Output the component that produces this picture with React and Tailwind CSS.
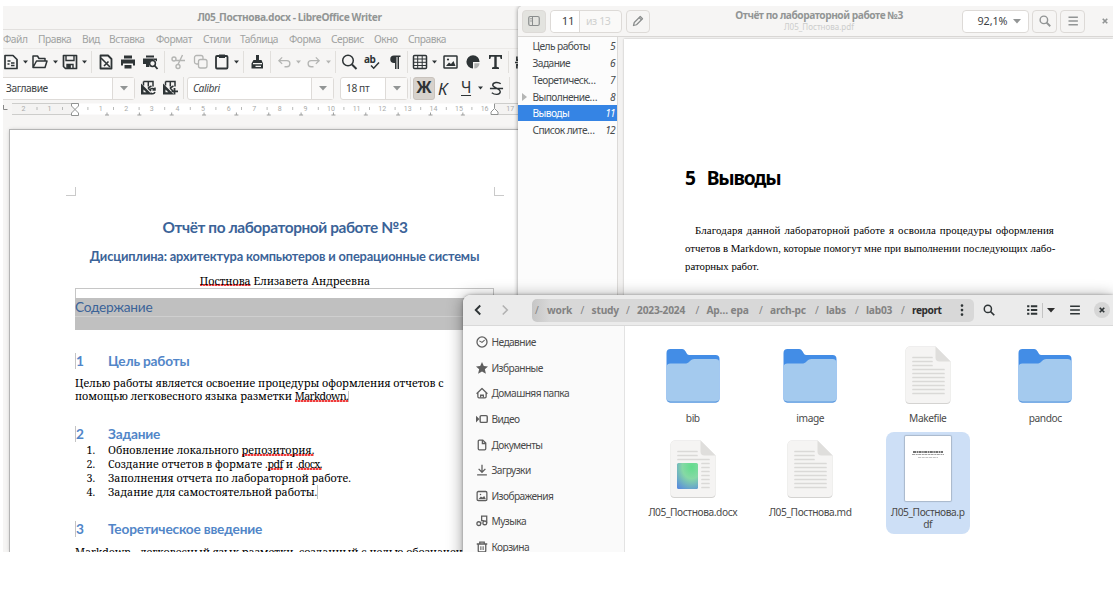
import React from 'react';

function Glyph({ children, size = 'w-[16px] h-[16px] -ml-[0.5px]', className = 'text-[#2e3436]' }) {
  return (
    <svg viewBox="0 0 16 16" className={`shrink-0 overflow-visible ${size} ${className}`} fill="none" stroke="currentColor" strokeWidth="1.7">
      {children}
    </svg>
  );
}

function Arrow({ className = 'text-[#2e3436]' }) {
  return (
    <svg viewBox="0 0 7 4" className={`w-[7px] h-[4px] shrink-0 ${className}`} fill="currentColor">
      <path d="M1 .5h5L3.500 3.500z" />
    </svg>
  );
}

const Sep = () => <div className="h-[22px] w-px bg-[#e1dfdc]" />;
const GREY = 'text-[#b4b5b3]';

const toolbar = [
  ['w-[19px]', <Glyph><path d="M2 1.500h8l4 4v9H2z" strokeLinejoin="round" /><path d="M4.500 7h3M4.500 10h2M8 9h3.500M8 11.500h3.500" strokeWidth="1.300" /></Glyph>],
  ['w-[10px]', <Arrow />],
  ['w-[20px]', <Glyph><path d="M1 13.500V2h4.500l1.500 2.500h6V7M1 13.500L4.500 7H15l-2 6.500z" strokeLinejoin="round" strokeWidth="1.500" /></Glyph>],
  ['w-[10px]', <Arrow />],
  ['w-[19px]', <Glyph><path d="M1.500 1.500h13v13h-11l-2-2z" strokeLinejoin="round" /><path d="M4 1.500v5h8v-5M5 14.500v-4h6v4" strokeWidth="1.400" /><path d="M6 11h2v3H6z" fill="currentColor" /></Glyph>],
  ['w-[10px]', <Arrow />],
  ['w-[7px]', <Sep />],
  ['w-[22px]', <Glyph><path d="M2.500 1.500h7.500l3.500 3.500v9.500h-11z" strokeLinejoin="round" strokeWidth="1.800" /><path d="M3 4l9 9M10.500 7.500L6 12" strokeWidth="1.600" /></Glyph>],
  ['w-[22px]', <Glyph><path d="M4 1.500h8v3H4zM1 5.500h14v6h-2v-2H3v2H1zM4.500 11h7v3.500h-7z" fill="currentColor" stroke="none" /></Glyph>],
  ['w-[22px]', <Glyph><path d="M4 1.500h8v2H4zM1 4.500h14v3a4.500 4.500 0 0 0-8 3.500l.5 2H4v-3H1z" fill="currentColor" stroke="none" /><circle cx="10.500" cy="9.500" r="2.900" strokeWidth="1.500" /><path d="M12.500 11.500L15.500 15" strokeWidth="1.900" /></Glyph>],
  ['w-[6px]', <Sep />],
  ['w-[23px]', <Glyph className={GREY}><circle cx="4" cy="5" r="2" strokeWidth="1.400" /><circle cx="8" cy="12.500" r="2" strokeWidth="1.400" /><path d="M6 6.500h9M8 10.500L12.500 1" strokeWidth="1.400" /></Glyph>],
  ['w-[21px]', <Glyph className={GREY}><rect x="1.500" y="1.500" width="8.500" height="8.500" rx="2" strokeWidth="1.300" /><rect x="5.500" y="5.500" width="8.500" height="8.500" rx="2" fill="#f6f5f4" strokeWidth="1.300" /></Glyph>],
  ['w-[19px]', <Glyph><rect x="2" y="2" width="11.500" height="12.500" rx="1" strokeWidth="1.800" /><path d="M5 .5h6v3.500H5z" fill="currentColor" stroke="none" /></Glyph>],
  ['w-[10px]', <Arrow />],
  ['w-[6px]', <Sep />],
  ['w-[21px]', <Glyph><path d="M7 1h3v5h2.500l1.500 3.500v5H2.500v-5L4.500 6H7z" fill="currentColor" stroke="none" /><path d="M4 9.700h9M6.500 12.300h5.500" stroke="#f6f5f4" strokeWidth="1.200" /></Glyph>],
  ['w-[7px]', <Sep />],
  ['w-[18px]', <Glyph className={GREY} size="w-[15px] h-[15px]"><path d="M5.500 2.500L2 6l3.500 3.500M2 6h8.500a3.200 3.200 0 0 1 0 6.500H8" strokeWidth="1.400" /></Glyph>],
  ['w-[11px]', <Arrow className={GREY} />],
  ['w-[19px]', <Glyph className={GREY} size="w-[15px] h-[15px]"><path d="M10.500 2.500L14 6l-3.500 3.500M14 6H5.500a3.200 3.200 0 0 0 0 6.500H8" strokeWidth="1.400" /></Glyph>],
  ['w-[10px]', <Arrow className={GREY} />],
  ['w-[6px]', <Sep />],
  ['w-[23px]', <Glyph><circle cx="7" cy="6.500" r="5.300" strokeWidth="1.500" /><path d="M11 10.500l4.500 4.500" strokeWidth="1.900" /></Glyph>],
  ['w-[24px]', <div className="relative h-[16px] w-[15px] text-[10px] leading-[10px] font-bold tracking-[-0.4px] text-[#2e3436]">ab<div className="absolute top-0 left-0"><Glyph><path d="M7 11.500l2.700 2.700L15 8.500" strokeWidth="1.500" /></Glyph></div></div>],
  ['w-[19px]', <Glyph><path d="M6 1.500h6.500v1.500H11v12H9.500V3H8.500v12H7V9H6a3.700 3.700 0 0 1 0-7.500z" fill="currentColor" stroke="none" /></Glyph>],
  ['w-[5px]', <Sep />],
  ['w-[19px]', <Glyph><rect x="1.500" y="1.500" width="13" height="13" rx="1" strokeWidth="1.500" /><path d="M1.500 5h13M1.500 8.300h13M1.500 11.500h13M5.700 1.500v13M10.200 1.500v13" strokeWidth="1" /></Glyph>],
  ['w-[12px]', <Arrow />],
  ['w-[22px]', <Glyph><rect x="1" y="2" width="13" height="12" rx=".6" strokeWidth="1.500" /><path d="M3 12l3-3.500 2 1.500 2.500-3 2 5z" fill="currentColor" stroke="none" /><circle cx="5" cy="5.500" r="1.100" fill="currentColor" stroke="none" /></Glyph>],
  ['w-[23px]', <Glyph><path d="M8 1.200a6.600 6.600 0 1 0 0 13.200V8h6.600A6.600 6.600 0 0 0 8 1.200z" fill="currentColor" stroke="none" /><path d="M9.300 9.300h5.200a5.200 5.200 0 0 1-5.200 5.200z" fill="#b0b2b1" stroke="none" /></Glyph>],
  ['w-[20px]', <Glyph><path d="M1 1h13v4h-1.300L12 2.800H8.700v10l2.300.7V15H4v-1.500l2.300-.7v-10H3L2.300 5H1z" fill="currentColor" stroke="none" /></Glyph>],
  ['w-[7px]', <Sep />],
  ['w-[16px]', <Glyph size="w-[15px] h-[15px]"><path d="M2 1.500v4h12v-4M2 14.500v-4h12v4M0 8h3M5 8h3" /></Glyph>],
];

const menu = [
  ['Файл', 'w-[35px]'], ['Правка', 'w-[44px]'], ['Вид', 'w-[27px]'], ['Вставка', 'w-[47px]'],
  ['Формат', 'w-[47px]'], ['Стили', 'w-[37px]'], ['Таблица', 'w-[49px]'], ['Форма', 'w-[42px]'],
  ['Сервис', 'w-[43px]'], ['Окно', 'w-[34px]'], ['Справка', 'w-[40px]'],
];

function StyleIcon({ plus }) {
  return (
    <Glyph>
      <path d="M3.500 1.500h9.500v5M3.500 1.500v4M8.300 1.500v5" strokeWidth="1.500" />
      <path d="M1 3.500L12 14.500H1z" fill="currentColor" stroke="none" />
      <path d="M3.500 9.500v2.800h2.800z" fill="#f6f5f4" stroke="none" />
      <path d="M8 8l3 3M8 8l3.500-2" strokeWidth="1.500" />
      {plus ? <path d="M12.500 8v6.500M9.500 11.300h6.500" strokeWidth="1.800" /> : <path d="M10 10a2.600 2.600 0 0 1 4.500-.5M15 12a2.600 2.600 0 0 1-4.500.8M15 7.500v2.500h-2.500" strokeWidth="1.500" />}
    </Glyph>
  );
}

function Combo({ width, text, italic = '' }) {
  return (
    <div className={`flex h-[23px] shrink-0 rounded-[3px] border border-[#dedbd8] bg-white ${width}`}>
      <div className={`flex flex-1 items-center pl-[5px] ${italic}`}>{text}</div>
      <div className="flex w-[22px] items-center justify-center border-l border-[#dedbd8] bg-[#faf9f8]">
        <svg viewBox="0 0 8 5" className="h-[5px] w-[8px]" fill="#929595"><path d="M0 0h8L4 4.600z" /></svg>
      </div>
    </div>
  );
}

function Ruler() {
  const nums = Array.from({ length: 17 }, (_, i) => i + 1);
  const tabs = Array.from({ length: 12 }, (_, i) => i);
  return (
    <svg viewBox="0 0 515 29" className="h-[29px] w-[515px] shrink-0">
      <rect x="9" y="2.500" width="500" height="11" fill="#fff" />
      <rect x="9" y="2.500" width="63" height="11" fill="#f4f3f2" />
      <rect x="491" y="2.500" width="24" height="11" fill="#f4f3f2" />
      <path d="M9 2.500h63M9 13.500h63M491 2.500h24M491 13.500h24" stroke="#cdcdcb" />
      <path d="M0.500 4v4.500H4.500" stroke="#888" fill="none" />
      <g fontFamily="Roboto, sans-serif" fontSize="7" fill="#a8aaa9" textAnchor="middle">
        <text x="20.500" y="10">2</text>
        <text x="46.500" y="10">1</text>
        {nums.map((n) => <text key={n} x={72 + n * 25.6} y="10">{n}</text>)}
      </g>
      <g stroke="#b9bab9">
        <path d="M34 6v3M59.500 6v3" />
        {nums.slice(0, 16).map((n) => <path key={n} d={`M${59.3 + n * 25.6} 6v3`} />)}
      </g>
      {tabs.map((n) => <path key={n} d={`M${102 + n * 32.35} 14h4M${104 + n * 32.35} 11.500v2.500`} stroke="#9d9f9e" />)}
      <path d="M68.500 2.500h7v2.500l-3.500 3.500 3.500 3.500v2.500h-7V12l3.500-3.500L68.500 5z" fill="#fff" stroke="#858786" strokeWidth=".9" />
      <path d="M488 13.500v-2.500l3.500-3.500 3.500 3.500v2.500zM491.500 7V3" fill="#fff" stroke="#858786" strokeWidth=".9" />
    </svg>
  );
}

const Bad = ({ children, className = '' }) => (
  <span className={`bg-[linear-gradient(90deg,#ef3b3b_60%,#f7a3a3_60%)] bg-[length:3px_1.5px] bg-[position:0_88%] bg-repeat-x ${className}`}>{children}</span>
);

function Heading({ n, children }) {
  return (
    <div className="flex h-[20px] items-center font-['Lato'] text-[13.7px] leading-none font-bold tracking-[-0.2px] text-[#5286c8]">
      <div className="flex h-[16px] w-[33px] items-center border-l border-[#c4c4c4]">{n}</div>
      {children}
    </div>
  );
}

function Writer() {
  return (
    <div className="absolute top-0 left-0 flex h-[546px] w-[573px] flex-col overflow-hidden bg-[#f6f5f4] font-['Noto_Sans'] text-[10.2px] leading-none whitespace-nowrap">
      <div className="flex h-[24px] shrink-0 items-center justify-center border-b border-[#e2e0de] pb-px text-[10.2px] font-bold tracking-[-0.4px] text-[#929595]">
        Л05_Постнова.docx - LibreOffice Writer
      </div>
      <div className="flex h-[19px] shrink-0 items-center border-b border-[#ebe9e7] pt-px tracking-[-0.45px] text-[#a0a2a1]">
        {menu.map(([t, w]) => <span key={t} className={`shrink-0 ${w}`}>{t}</span>)}
      </div>
      <div className="flex h-[26px] shrink-0 items-center">
        {toolbar.map(([w, el], i) => <div key={i} className={`flex shrink-0 items-center ${w}`}>{el}</div>)}
      </div>
      <div className="flex h-[26px] shrink-0 items-center tracking-[-0.4px] text-[#3d4244]">
        <Combo width="w-[135px] -ml-[3px] mr-[5px]" text="Заглавие" />
        <div className="w-[22px]"><StyleIcon /></div>
        <div className="w-[21px]"><StyleIcon plus /></div>
        <Sep />
        <Combo width="w-[147px] ml-[3px]" text="Calibri" italic="italic" />
        <Combo width="w-[68px] ml-[6px] mr-[2px]" text="18 пт" />
        <Sep />
        <div className="ml-[2px] flex h-[23px] w-[22px] shrink-0 items-center justify-center rounded-[3px] border border-[#c9c3bd] bg-[#d7d2cc] text-[15.5px] font-bold tracking-normal text-[#2e3436]">Ж</div>
        <div className="ml-[3px] w-[23px] text-[17px] text-[#2e3436] italic">К</div>
        <div className="w-[16px] text-[15.5px] text-[#2e3436] underline decoration-1 underline-offset-2">Ч</div>
        <div className="w-[12px]"><Arrow /></div>
        <div className="flex w-[20px]">
          <Glyph size="w-[15px] h-[15px]"><path d="M12.500 3C10 .8 4 1 4 4.500 4 7 12 8 12 11.500c0 3.500-6 3.500-9 1M1 8h14" strokeWidth="1.500" /></Glyph>
        </div>
        <Sep />
      </div>
      <Ruler />
      <div className="relative ml-[7px] flex h-[422px] w-[566px] shrink-0 flex-col bg-white pt-[85px] pl-[65px] text-black shadow-[0_0_0_1px_#b4b4b4,0_0_4px_rgba(0,0,0,0.25)]">
        <div className="absolute top-[57px] left-[56px] h-[9px] w-[10px] border-r border-b border-[#cacaca]" />
        <div className="absolute top-[57px] left-[484px] h-[9px] w-[10px] border-b border-l border-[#cacaca]" />
        <div className="flex w-[419px] flex-col font-['Noto_Serif'] text-[10.71px]">
          <div className="flex h-[25px] items-center justify-center pl-px font-['Lato'] text-[15.4px] font-bold tracking-[-0.4px] text-[#3b6398]">Отчёт по лабораторной работе №3</div>
          <div className="flex h-[33px] items-center justify-center font-['Lato'] text-[12.8px] font-bold tracking-[-0.15px] text-[#3b6398]">Дисциплина: архитектура компьютеров и операционные системы</div>
          <div className="flex h-[15px] items-center justify-center pt-px pl-px whitespace-pre"><Bad>Постнова</Bad> Елизавета Андреевна</div>
          <div className="h-[10px] border border-b-0 border-[#c6c6c6]" />
          <div className="flex h-[32px] flex-col bg-[#c0c0c0]">
            <div className="flex h-[19px] items-center border-b border-[#cfcfcf] font-['Lato'] text-[13.7px] tracking-[-0.25px] text-[#3b6398]">Содержание</div>
          </div>
          <div className="h-[21px]" />
          <Heading n="1">Цель работы</Heading>
          <div className="mt-[6px] flex h-[13px] items-center">Целью работы является освоение процедуры оформления отчетов с</div>
          <div className="flex h-[13px] items-center whitespace-pre">помощью легковесного языка разметки <span className="border-r border-[#c4c4c4]"><Bad className="tracking-[-0.58px]">Markdown.</Bad></span></div>
          <div className="h-[21px]" />
          <Heading n="2">Задание</Heading>
          <div className="-mt-px grid auto-rows-[14.2px] grid-cols-[21px_1fr] items-center">
            <span className="pl-[11.5px]">1.</span><span className="pl-[12px]">Обновление локального <Bad>репозитория.</Bad></span>
            <span className="pl-[11.5px]">2.</span><span className="pl-[12px]">Создание отчетов в формате .<Bad className="tracking-[-0.6px]">pdf</Bad> и .<Bad className="tracking-[-0.7px]">docx.</Bad></span>
            <span className="pl-[11.5px]">3.</span><span className="pl-[12px]">Заполнения отчета по лабораторной работе.</span>
            <span className="pl-[11.5px]">4.</span><span className="pl-[12px]"><span className="border-r border-[#c4c4c4]">Задание для самостоятельной работы.</span></span>
          </div>
          <div className="h-[19px]" />
          <Heading n="3">Теоретическое введение</Heading>
          <div className="mt-[7px] flex h-[13px] items-center">Markdown - легковесный язык разметки, созданный с целью обозначения</div>
        </div>
      </div>
    </div>
  );
}

const outline = [['Цель работы', 5], ['Задание', 6], ['Теоретическ…', 7], ['Выполнение…', 8], ['Выводы', 11], ['Список лите…', 12]];
const headBtn = 'flex h-[23px] items-center justify-center rounded-[4px] border border-[#dddad7] shrink-0';

function Viewer() {
  return (
    <div className="absolute top-0 left-[515px] flex h-[546px] w-[595px] flex-col overflow-hidden rounded-tl-[5px] bg-white font-['Noto_Sans'] text-[10.2px] leading-none whitespace-nowrap shadow-[0_0_4px_rgba(0,0,0,0.45)]">
      <div className="flex h-[31px] shrink-0 items-center border-b border-[#d9d7d5] bg-[#f6f5f4] pl-[4px]">
        <div className={`${headBtn} w-[24px] bg-[#e3e3df]`}>
          <Glyph size="w-[12px] h-[12px]" className="text-[#8a8d8d]"><rect x="1" y="2" width="14" height="12" rx="2" strokeWidth="1.600" /><path d="M6 2v12M3 5h2M3 8h2" strokeWidth="1.400" /></Glyph>
        </div>
        <div className={`${headBtn} ml-[4px] w-[72px] bg-[#faf9f8]`}>
          <div className="flex h-full w-[29px] items-center justify-end rounded-l-[4px] border-r border-[#dddad7] bg-white pr-[5px] text-[11.500px] tracking-[-0.5px] text-[#3d4244]">11</div>
          <div className="flex-1 pl-[6px] text-[10.500px] tracking-[-0.4px] text-[#cfd0cf]">из 13</div>
        </div>
        <div className={`${headBtn} ml-[4px] w-[24px]`}>
          <Glyph size="w-[12px] h-[12px]" className="text-[#8a8d8d]"><path d="M2 14l1-4L11 2l3 3-8 8zM9.500 3.500l3 3" strokeWidth="1.700" strokeLinejoin="round" /></Glyph>
        </div>
        <div className="flex flex-1 flex-col items-center gap-[3px] pb-px pl-[26px]">
          <div className="font-bold tracking-[-0.46px] text-[#929595]">Отчёт по лабораторной работе №3</div>
          <div className="text-[8px] text-[#cccdcc]">Л05_Постнова.pdf</div>
        </div>
        <div className={`${headBtn} w-[67px] gap-[6px] bg-white pl-[8px] text-[10.800px] tracking-[-0.1px] text-[#3d4244]`}>
          92,1%
          <svg viewBox="0 0 8 5" className="h-[5px] w-[8px]" fill="#929595"><path d="M0 0h8L4 4.600z" /></svg>
        </div>
        <div className={`${headBtn} ml-[3px] w-[25px]`}>
          <Glyph size="w-[12px] h-[12px]" className="text-[#929595]"><circle cx="6.500" cy="6.500" r="5" strokeWidth="1.900" /><path d="M10 10l5 5" strokeWidth="2.400" /></Glyph>
        </div>
        <div className={`${headBtn} mr-[17px] ml-[3px] w-[25px]`}>
          <Glyph size="w-[12px] h-[12px]" className="text-[#929595]"><path d="M2 3h12.500M2 8h12.500M2 13h12.500" strokeWidth="1.900" /></Glyph>
        </div>
        <Glyph size="w-[6px] h-[6px] mr-[5px]" className="text-[#929595]"><path d="M2 2l12 12M14 2L2 14" strokeWidth="4.500" /></Glyph>
      </div>
      <div className="flex min-h-0 flex-1">
        <div className="flex w-[100px] shrink-0 flex-col border-r border-[#dcdad8] bg-[#fcfcfc] text-[#474b4d]">
          {outline.map(([t, n]) => (
            <div key={t} className={`flex h-[16.9px] shrink-0 items-center justify-between pt-px pr-[2px] ${n === 11 ? 'bg-[#3584e4] text-white' : ''}`}>
              <div className="flex items-center tracking-[-0.56px]">
                <div className="w-[14.5px] pl-[4px]">{n === 8 && <svg viewBox="0 0 5 8" className="h-[8px] w-[5px]" fill="#b5b6b5"><path d="M0 0l5 4-5 4z" /></svg>}</div>
                {t}
              </div>
              <span className="tracking-[-0.7px] italic">{n}</span>
            </div>
          ))}
        </div>
        <div className="flex flex-1 flex-col bg-[#f3f2f1] pt-[2px] pl-[6px]">
          <div className="flex flex-1 flex-col bg-white pt-[124px] pl-[61px] font-['Liberation_Serif'] text-[10.8px] text-black shadow-[0_0_2px_rgba(0,0,0,0.25)]">
            <div className="flex h-[30px] items-center gap-[12px] font-['Noto_Sans'] text-[19.2px] font-bold tracking-[-1.2px]"><span>5</span><span>Выводы</span></div>
            <div className="mt-[28px] w-[370px] leading-[18px]">
              <div className="-mr-px ml-[10px] w-[359px] text-[10.900px] tracking-[0.12px] [text-align-last:justify]">Благодаря данной лабораторной работе я освоила процедуры оформления</div>
              <div className="[text-align-last:justify]">отчетов в Markdown, которые помогут мне при выполнении последующих лабо-</div>
              <div>раторных работ.</div>
            </div>
          </div>
        </div>
      </div>
    </div>
  );
}

const places = [
  ['Недавние', <><circle cx="8" cy="8" r="6.700" /><path d="M4.500 6.500L8 8.500l3.500-3" strokeWidth="1.500" /></>],
  ['Избранные', <path d="M8 0l2.400 5.300 5.600.6-4.200 3.700 1.400 5.900L8 12.500l-5.200 3 1.400-5.900L0 5.900l5.600-.6z" fill="currentColor" stroke="none" />],
  ['Домашняя папка', <><path d="M.8 9L8 2l7.200 7M2.500 7.500v5.500A1.500 1.500 0 0 0 4 14.500h8a1.500 1.500 0 0 0 1.500-1.500V7.500" strokeLinejoin="round" strokeWidth="1.700" /><path d="M6.200 14v-3h3.600v3" strokeWidth="1.700" /></>],
  ['Видео', <><rect x="5.500" y="3.500" width="9.500" height="9" rx="1.500" strokeWidth="1.900" /><path d="M0 3.500L4.500 8 0 12.500z" fill="currentColor" stroke="none" /></>],
  ['Документы', <path d="M3 3a1.500 1.500 0 0 1 1.500-1.500H9L13 5.500v7.500a1.500 1.500 0 0 1-1.500 1.500h-7A1.500 1.500 0 0 1 3 13zM8.500 1.500V6H13" />],
  ['Загрузки', <path d="M8 1v9.500M3.500 6.500L8 11l4.500-4.500M1.500 14.500h13" />],
  ['Изображения', <><rect x="1.500" y="2" width="13" height="12" rx="1.500" /><path d="M3.500 12l3-3.500 2 1.500 2.500-2 2 4z" fill="currentColor" stroke="none" /><circle cx="6" cy="6" r="1" fill="currentColor" stroke="none" /></>],
  ['Музыка', <><circle cx="3.700" cy="11.500" r="2.500" /><circle cx="11.700" cy="10.500" r="2.500" /><path d="M6.300 12V9M14.300 11V1.500H7.500V7.500h3" /></>],
  ['Корзина', <><path d="M3 4.500v8.500a1.500 1.500 0 0 0 1.500 1.500h7A1.500 1.500 0 0 0 13 13V4.500M1 4h14M5 3.500V1.500h6v2" /><path d="M6.500 7v5M9.500 7v5" strokeWidth="1.400" /></>],
];

const crumbs = [['work', 'w-[33.5px]'], ['study', 'w-[34.5px]'], ['2023-2024', 'w-[58.5px]'], ['Ap… epa', 'w-[52.5px]'], ['arch-pc', 'w-[45px]'], ['labs', 'w-[29px]'], ['lab03', 'w-[35px]']];

const Folder = () => (
  <svg viewBox="0 0 54 56" className="h-[56px] w-[54px]">
    <path d="M.5 5A4 4 0 0 1 4.500 1H15c3.500 0 4 1.500 5.500 4 1 2 2 2 4 2H49.500a4 4 0 0 1 4 4v39.500a4 4 0 0 1-4 4h-45a4 4 0 0 1-4-4z" fill="#438de6" />
    <path d="M.5 19.500a4 4 0 0 1 4-4H19c2 0 3-.5 4.500-2s2.500-2.500 5-2.500h21a4 4 0 0 1 4 4v35a4 4 0 0 1-4 4h-45a4 4 0 0 1-4-4z" fill="#a4caee" />
    <path d="M1 51.500a4 4 0 0 0 3.500 3h45a4 4 0 0 0 3.500-3 4 4 0 0 1-3.500 2h-45a4 4 0 0 1-3.500-2z" fill="#5b97dc" />
  </svg>
);

function Doc({ id, picture }) {
  const rows = [12, 16, 20, 24, 28, 32, 36, 40, 44, 48];
  return (
    <svg viewBox="0 0 46 58" className="h-[58px] w-[46px]">
      <defs>
        <radialGradient id={id} cx=".7" cy=".15" r="1"><stop offset="0" stopColor="#62dc8c" /><stop offset=".45" stopColor="#86d9a5" /><stop offset="1" stopColor="#5b8fdb" /></radialGradient>
      </defs>
      <path d="M.5 5a4.500 4.500 0 0 1 4.500-4.500h25.500L45.500 15.500V54a4 4 0 0 1-4 4H4.500a4 4 0 0 1-4-4z" fill="#d4d3d1" />
      <path d="M.5 5A4.500 4.500 0 0 1 5 .5h25.500L45.500 15.500V52.500a4 4 0 0 1-4 4.500H4.500a4 4 0 0 1-4-4.500z" fill="#f5f4f3" />
      <path d="M30.500 .5V11.500a4 4 0 0 0 4 4H45.500z" fill="#dfdedc" />
      <g stroke="#dad9d7" strokeWidth="1.700" strokeLinecap="round">
        {rows.map((y, i) => {
          const narrow = picture ? i > 2 : false;
          const end = picture ? (i < 2 ? 27 : 39) : i < 3 ? 27 : 39;
          return <path key={y} d={`M${narrow ? 32 : 8} ${y - 0.5}H${end}`} />;
        })}
      </g>
      {picture && <rect x="7" y="23" width="21" height="26" rx="1.500" fill={`url(#${id})`} />}
    </svg>
  );
}

const PdfPage = () => (
  <div className="flex h-[65px] w-[46px] flex-col items-center rounded-[1px] bg-white pt-[14px] shadow-[0_0_1px_1px_rgba(0,0,0,0.18)]">
    <svg viewBox="0 0 34 10" className="h-[10px] w-[34px]">
      <path d="M2 2h30" stroke="#444" strokeWidth="1.300" strokeDasharray="3 .6 1.500 .5" />
      <path d="M1 4.500h32" stroke="#888" strokeWidth=".8" strokeDasharray="3 .7 2 .5" />
      <path d="M7 7.500h20" stroke="#aaa" strokeWidth=".7" strokeDasharray="3 .7" />
    </svg>
  </div>
);

function File({ name, children, selected }) {
  return (
    <div className="flex flex-col items-center">
      <div className={`flex w-[84px] shrink-0 flex-col items-center rounded-[8px] ${selected ? '-mt-px h-[102px] bg-[#cddff6] pt-[4px]' : 'h-[102px] pt-[7px]'}`}>
        <div className={`flex shrink-0 items-end ${selected ? 'h-[65px]' : 'h-[58px]'}`}>{children}</div>
        <div className={`text-center leading-[12.500px] tracking-[-0.41px] ${selected ? 'mt-[5px]' : 'mt-[8px]'}`}>{name}</div>
      </div>
    </div>
  );
}

function Files() {
  return (
    <div className="absolute top-[289px] left-[460px] flex h-[270px] w-[650px] flex-col overflow-hidden rounded-tl-[8px] bg-white font-['Noto_Sans'] text-[10.2px] leading-none whitespace-nowrap text-[#4a4a4a] shadow-[0_2px_16px_rgba(0,0,0,0.42),0_0_3px_rgba(0,0,0,0.35)]">
      <div className="flex h-[31px] shrink-0 items-center border-b border-[#d9d9d9] bg-[#ebebeb] text-[#2e2e2e]">
        <Glyph size="w-[12px] h-[12px] ml-[9px]"><path d="M11 2L5 8l6 6" strokeWidth="2.500" /></Glyph>
        <Glyph size="w-[12px] h-[12px] ml-[15px]" className="text-[#b2b2b2]"><path d="M5 2l6 6-6 6" strokeWidth="2.200" /></Glyph>
        <div className="ml-[21px] flex h-[23px] w-[442px] items-center rounded-[5px] bg-[linear-gradient(to_right,#c6c6c6,#d8d8d8_18px)] text-[10.2px] font-bold text-[#828282]">
          <span className="w-[15px] pl-[3px] font-normal">/</span>
          {crumbs.map(([t, w]) => (
            <React.Fragment key={t}>
              <span className={`shrink-0 tracking-[-0.2px] ${w}`}>{t}</span>
              <span className="w-[11px] font-normal">/</span>
            </React.Fragment>
          ))}
          <span className="w-[44px] tracking-[-0.45px] text-[#2e2e2e]">report</span>
          <Glyph size="w-[12px] h-[12px]"><path d="M8 2v.1M8 8v.1M8 14v.1" strokeWidth="3.600" strokeLinecap="round" /></Glyph>
        </div>
        <Glyph size="w-[12px] h-[12px] ml-[9px]"><circle cx="6.500" cy="6.500" r="4.800" strokeWidth="2" /><path d="M10 10l5 5" strokeWidth="2.300" /></Glyph>
        <Glyph size="w-[12px] h-[12px] ml-[31px]"><path d="M1.500 3h3M1.500 8h3M1.500 13h3M6.500 3H15M6.500 8H15M6.500 13H15" strokeWidth="2.600" /></Glyph>
        <div className="ml-[4px] h-[15px] w-px bg-[#c4c4c4]" />
        <svg viewBox="0 0 8 5" className="ml-[4px] h-[5px] w-[8px]" fill="#2e2e2e"><path d="M0 0h8L4 4.600z" /></svg>
        <Glyph size="w-[12px] h-[12px] ml-[14px]"><path d="M1.500 3h13M1.500 8h13M1.500 13h13" strokeWidth="2.100" /></Glyph>
        <div className="ml-[13px] flex h-[16px] w-[16px] items-center justify-center rounded-full bg-[#d6d6d6]">
          <Glyph size="w-[6px] h-[6px]"><path d="M2 2l12 12M14 2L2 14" strokeWidth="4.500" /></Glyph>
        </div>
      </div>
      <div className="flex min-h-0 flex-1">
        <div className="flex w-[162px] shrink-0 flex-col border-r border-[#e3e3e3] bg-[#fafafa] pt-[3.500px]">
          {places.map(([t, icon]) => (
            <div key={t} className="flex h-[25.6px] shrink-0 items-center gap-[4px] pl-[12.500px] tracking-[-0.58px]">
              <Glyph size="w-[12px] h-[12px]" className="text-[#5e5e5e]">{icon}</Glyph>
              {t}
            </div>
          ))}
        </div>
        <div className="grid auto-rows-[93.500px] grid-cols-[repeat(4,117.5px)] content-start pt-[13px] pl-[9px]">
          <File name="bib"><Folder /></File>
          <File name="image"><Folder /></File>
          <File name="Makefile"><Doc id="mk" /></File>
          <File name="pandoc"><Folder /></File>
          <File name="Л05_Постнова.docx"><Doc id="dx" picture /></File>
          <File name="Л05_Постнова.md"><Doc id="md" /></File>
          <File name={<>Л05_Постнова.p<br />df</>} selected><PdfPage /></File>
        </div>
      </div>
    </div>
  );
}

export default function App() {
  return (
    <div className="h-[597px] w-[1113px] overflow-hidden bg-white pt-[6px] pl-[3px]">
      <div className="relative h-[546px] w-[1110px] overflow-hidden">
        <Writer />
        <Viewer />
        <Files />
      </div>
    </div>
  );
}
